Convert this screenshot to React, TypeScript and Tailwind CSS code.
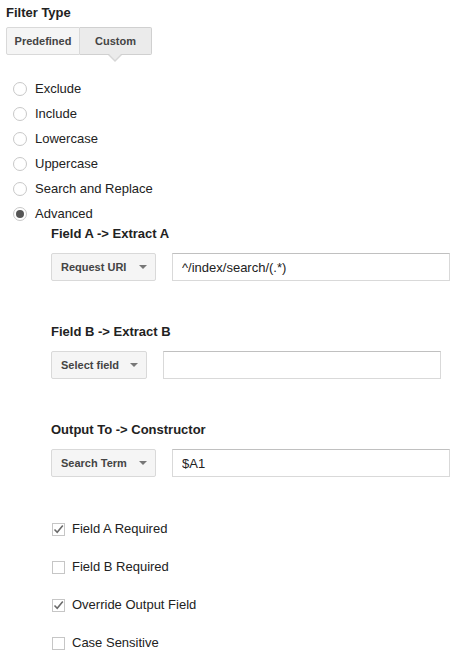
import { useState } from 'react'

const radioOptions = ['Exclude', 'Include', 'Lowercase', 'Uppercase', 'Search and Replace', 'Advanced']

interface FieldRow {
  title: string
  select: string
  selectWidth: string
  value: string
}

const fieldRows: FieldRow[] = [
  { title: 'Field A -> Extract A', select: 'Request URI', selectWidth: 'w-[105px]', value: '^/index/search/(.*)' },
  { title: 'Field B -> Extract B', select: 'Select field', selectWidth: 'w-[96px]', value: '' },
  { title: 'Output To -> Constructor', select: 'Search Term', selectWidth: 'w-[105px]', value: '$A1' },
]

const checkOptions = [
  { label: 'Field A Required', checked: true },
  { label: 'Field B Required', checked: false },
  { label: 'Override Output Field', checked: true },
  { label: 'Case Sensitive', checked: false },
]

function Radio({ checked }: { checked: boolean }) {
  return (
    <span className="flex h-[14px] w-[14px] shrink-0 items-center justify-center rounded-full border border-[#c8c8c8] bg-white">
      {checked && <span className="h-[8px] w-[8px] rounded-full bg-[#555]" />}
    </span>
  )
}

function Checkbox({ checked }: { checked: boolean }) {
  return (
    <span className="ml-[1px] flex h-[13px] w-[13px] shrink-0 items-center justify-center border border-[#c6c6c6] bg-white">
      {checked && (
        <svg width="11" height="11" viewBox="0 0 11 11" fill="none">
          <path d="M1.5 5.5 L4.2 8.2 L9.8 1.6" stroke="#6b6b6b" strokeWidth="1.6" />
        </svg>
      )}
    </span>
  )
}

export default function App() {
  const [filter, setFilter] = useState('Advanced')
  const [tab, setTab] = useState('Custom')

  return (
    <div className="w-[464px] bg-white pl-[6px] pt-[5px] text-[#222] font-['Liberation_Sans',Arial,sans-serif]">
      <h2 className="text-[13px] leading-[15px] font-bold">Filter Type</h2>

      <div className="mt-[7px] flex">
        <button
          onClick={() => setTab('Predefined')}
          className={`h-[28px] w-[74px] rounded-l-[2px] border border-[#d9d9d9] text-[11px] font-bold text-[#444] ${tab === 'Predefined' ? 'bg-[#e8e8e8]' : 'bg-[#f5f5f5]'}`}
        >
          Predefined
        </button>
        <div className="relative">
          <button
            onClick={() => setTab('Custom')}
            className={`h-[28px] w-[72px] rounded-r-[2px] border border-l-0 border-[#d0d0d0] text-[11px] font-bold text-[#444] ${tab === 'Custom' ? 'bg-[#ebebeb]' : 'bg-[#f5f5f5]'}`}
          >
            Custom
          </button>
          {tab === 'Custom' && (
            <>
              <span className="absolute left-[28px] top-[28px] h-0 w-0 border-x-[7px] border-t-[7px] border-x-transparent border-t-[#d6d6d6]" />
              <span className="absolute left-[29px] top-[27px] h-0 w-0 border-x-[6px] border-t-[6px] border-x-transparent border-t-[#ebebeb]" />
            </>
          )}
        </div>
      </div>

      <div className="mt-[21px] flex flex-col">
        {radioOptions.map((opt) => (
          <label key={opt} onClick={() => setFilter(opt)} className="flex h-[25px] items-center pl-[7px] text-[13px] leading-[25px]">
            <Radio checked={filter === opt} />
            <span className="ml-[8px]">{opt}</span>
          </label>
        ))}
      </div>

      <div className="flex flex-col pl-[45px]">
        {fieldRows.map((row, i) => (
          <div key={row.title} className={i > 0 ? 'mt-[43px]' : ''}>
            <h3 className="text-[13px] leading-[15px] font-bold">{row.title}</h3>
            <div className="mt-[12px] flex items-center gap-[16px]">
              <button className={`flex h-[28px] ${row.selectWidth} items-center justify-between rounded-[2px] border border-[#d9d9d9] bg-[#f5f5f5] pl-[9px] pr-[8px] text-[11px] font-bold text-[#444]`}>
                <span>{row.select}</span>
                <span className="h-0 w-0 border-x-[4px] border-t-[4px] border-x-transparent border-t-[#777]" />
              </button>
              <input
                defaultValue={row.value}
                className="h-[28px] w-[278px] border border-[#d9d9d9] border-t-[#c0c0c0] px-[9px] text-[13px] text-[#222] outline-none"
              />
            </div>
          </div>
        ))}

        <div className="mt-[33px] flex flex-col">
          {checkOptions.map((c) => (
            <label key={c.label} className="flex h-[38px] items-center text-[13px] leading-[38px]">
              <Checkbox checked={c.checked} />
              <span className="ml-[7px]">{c.label}</span>
            </label>
          ))}
        </div>
      </div>
    </div>
  )
}
